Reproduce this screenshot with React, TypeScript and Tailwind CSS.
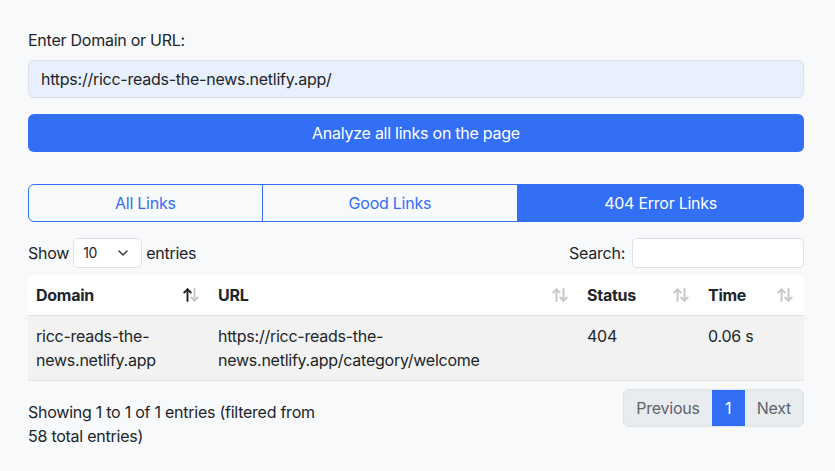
import React from "react";

const BLUE = "#326ff5";

function SortIcon({ active }: { active?: boolean }) {
  return (
    <svg width="16" height="15" viewBox="0 0 16 15" className="absolute right-[11px] top-1/2 -translate-y-1/2">
      <g fill="none" strokeWidth="1.9" strokeLinecap="round" strokeLinejoin="round">
        <g stroke={active ? "#1f2328" : "#c6c6c6"}>
          <path d="M4.5 13.5V1.8" />
          <path d="M1.3 5L4.5 1.8L7.7 5" />
        </g>
        <g stroke="#c6c6c6">
          <path d="M11.5 1.5V13.2" />
          <path d="M8.3 10L11.5 13.2L14.7 10" />
        </g>
      </g>
    </svg>
  );
}

export default function App() {
  return (
    <div
      className="min-h-[471px] w-full bg-[#f8f9fa] px-[28px] pt-[28px] pb-4 text-[16px] leading-[24px] tracking-[-0.25px] text-[#212529]"
      style={{ fontFamily: "Inter, 'Noto Sans', 'Liberation Sans', sans-serif" }}
    >
      <div className="w-[776px]">
        <div className="mb-2">Enter Domain or URL:</div>
        <div className="flex h-[38px] items-center rounded-[6px] border border-[#dee2e6] bg-[#e8f0fe] px-3">
          https://ricc-reads-the-news.netlify.app/
        </div>
        <button
          className="mt-4 flex h-[38px] w-full items-center justify-center rounded-[6px] text-white"
          style={{ backgroundColor: BLUE }}
        >
          Analyze all links on the page
        </button>

        <div className="mt-8 flex h-[38px]">
          <div className="flex flex-auto items-center justify-center rounded-l-[6px] border border-[#326ff5] text-[#326ff5]">
            All Links
          </div>
          <div className="-ml-px flex flex-auto items-center justify-center border border-[#326ff5] text-[#326ff5]">
            Good Links
          </div>
          <div className="-ml-px flex flex-auto items-center justify-center rounded-r-[6px] border border-[#326ff5] bg-[#326ff5] text-white">
            404 Error Links
          </div>
        </div>

        <div className="mt-4 flex h-[30px] items-center justify-between">
          <div className="flex items-center">
            <span>Show</span>
            <div className="mx-[4px] flex h-[30px] w-[69px] items-center justify-between rounded-[5px] border border-[#dee2e6] bg-white pl-[9px] pr-[12px] text-[14px]">
              <span>10</span>
              <svg width="12" height="12" viewBox="0 0 12 12">
                <path d="M2 4l4 4 4-4" fill="none" stroke="#343a40" strokeWidth="1.5" strokeLinecap="round" strokeLinejoin="round" />
              </svg>
            </div>
            <span>entries</span>
          </div>
          <div className="flex items-center">
            <span>Search:</span>
            <div className="ml-[7px] h-[30px] w-[172px] rounded-[5px] border border-[#dee2e6] bg-white" />
          </div>
        </div>

        <table className="mt-[7px] w-full table-fixed border-collapse">
          <colgroup>
            <col className="w-[182px]" />
            <col className="w-[369px]" />
            <col className="w-[121px]" />
            <col className="w-[104px]" />
          </colgroup>
          <thead>
            <tr className="bg-white">
              <th className="relative border-b border-[#dee2e6] px-2 py-2 text-left font-bold">
                Domain
                <SortIcon active />
              </th>
              <th className="relative border-b border-[#dee2e6] px-2 py-2 text-left font-bold">
                URL
                <SortIcon />
              </th>
              <th className="relative border-b border-[#dee2e6] px-2 py-2 text-left font-bold">
                Status
                <SortIcon />
              </th>
              <th className="relative border-b border-[#dee2e6] px-2 py-2 text-left font-bold">
                Time
                <SortIcon />
              </th>
            </tr>
          </thead>
          <tbody>
            <tr className="bg-[#f2f2f2] align-top">
              <td className="border-b border-[#dee2e6] px-2 py-2">
                ricc-reads-the-
                <br />
                news.netlify.app
              </td>
              <td className="border-b border-[#dee2e6] px-2 py-2">
                https://ricc-reads-the-
                <br />
                news.netlify.app/category/welcome
              </td>
              <td className="border-b border-[#dee2e6] px-2 py-2">404</td>
              <td className="border-b border-[#dee2e6] px-2 py-2">0.06 s</td>
            </tr>
          </tbody>
        </table>

        <div className="mt-2 flex items-start justify-between">
          <div className="pt-[11px]">
            Showing 1 to 1 of 1 entries (filtered from
            <br />
            58 total entries)
          </div>
          <div className="flex h-[38px] overflow-hidden rounded-[6px] border border-[#dee2e6] bg-[#e9ecef] text-[#5c636a]">
            <div className="flex items-center px-3">Previous</div>
            <div className="flex w-[33px] items-center justify-center text-white" style={{ backgroundColor: BLUE }}>
              1
            </div>
            <div className="flex items-center px-3">Next</div>
          </div>
        </div>
      </div>
    </div>
  );
}
